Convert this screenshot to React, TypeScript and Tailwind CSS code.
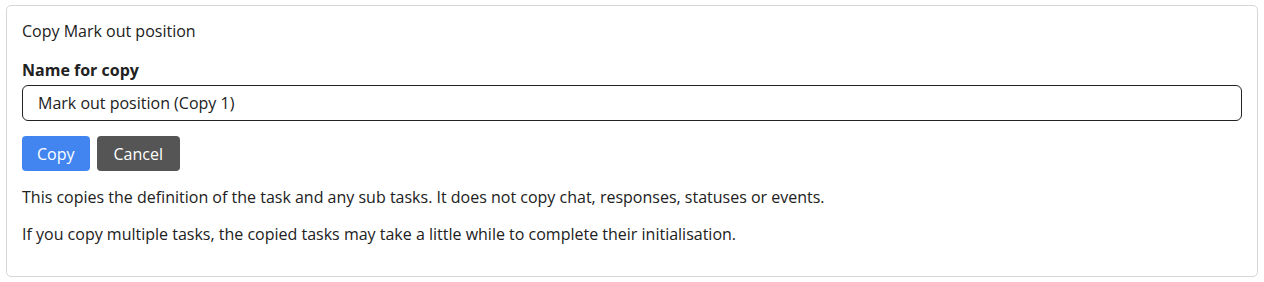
import React from "react";

const App: React.FC = () => {
  return (
    <div className="min-h-screen w-full bg-white px-[6px] pt-[5px] font-['Open_Sans',sans-serif] text-[#212121]">
      <div className="rounded-[5px] border border-[#d6d6d6] px-[15px] pt-[14px] pb-[31px]">
        <p className="text-[16px] leading-[22px]">Copy Mark out position</p>
        <label className="mt-[17px] block text-[16px] font-bold leading-[22px]">
          Name for copy
        </label>
        <input
          className="mt-[4px] block h-[36px] w-full rounded-[6px] border border-[#222] px-[15px] text-[16px] outline-none"
          defaultValue="Mark out position (Copy 1)"
        />
        <div className="mt-[15px] flex gap-[7px]">
          <button className="h-[35px] rounded-[4px] bg-[#4285f0] px-[15px] text-[16px] text-white">
            Copy
          </button>
          <button className="h-[35px] rounded-[4px] bg-[#555555] px-[17px] text-[16px] text-white">
            Cancel
          </button>
        </div>
        <p className="mt-[15px] text-[16px] leading-[22px]">
          This copies the definition of the task and any sub tasks. It does not
          copy chat, responses, statuses or events.
        </p>
        <p className="mt-[15px] text-[16px] leading-[22px]">
          If you copy multiple tasks, the copied tasks may take a little while to
          complete their initialisation.
        </p>
      </div>
    </div>
  );
};

export default App;
